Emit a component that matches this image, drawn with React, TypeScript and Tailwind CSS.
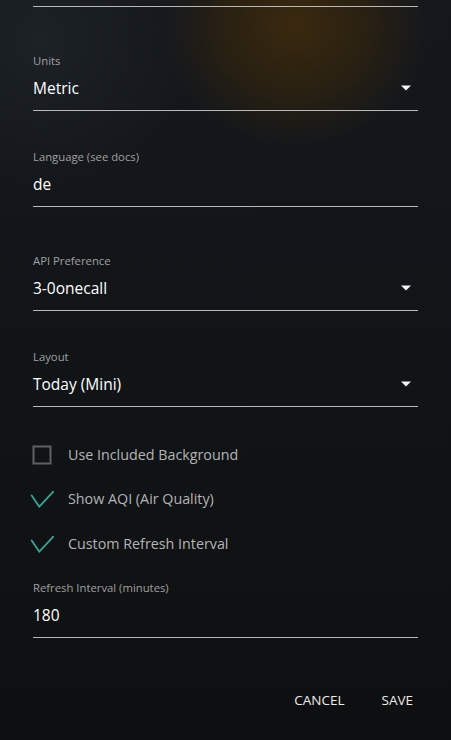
import React from "react";

const font = { fontFamily: '"Open Sans", "Noto Sans", sans-serif' };

function Arrow() {
  return (
    <svg width="12" height="6" viewBox="0 0 12 6" className="shrink-0">
      <path d="M1 0.5 L11 0.5 L6 5.5 Z" fill="#f2f2f2" />
    </svg>
  );
}

function Field({
  label,
  value,
  select,
  mt,
}: {
  label: string;
  value: string;
  select?: boolean;
  mt: string;
}) {
  return (
    <div className={`${mt} border-b border-[#b8b8b8] pb-[10px]`}>
      <div className="text-[11.3px] leading-[16px] text-[#a0a0a0]">{label}</div>
      <div className="mt-[7px] flex items-center justify-between h-[24px]">
        <span className="text-[15.5px] leading-[24px] text-white">{value}</span>
        {select && (
          <span className="mr-[6px] flex items-center">
            <Arrow />
          </span>
        )}
      </div>
    </div>
  );
}

function Check({ checked, label, mt }: { checked: boolean; label: string; mt: string }) {
  return (
    <div className={`${mt} flex h-[28px] items-center -ml-[3px]`}>
      <svg width="24" height="24" viewBox="0 0 24 24" className="shrink-0">
        {checked ? (
          <path
            d="M1.7 8.5 L9.3 19.7 L23.3 4.7"
            fill="none"
            stroke="#35a596"
            strokeWidth="1.8"
            strokeLinecap="round"
            strokeLinejoin="round"
          />
        ) : (
          <rect x="3.5" y="3.5" width="17" height="17" fill="none" stroke="#5f6163" strokeWidth="2" />
        )}
      </svg>
      <span className="ml-[14px] text-[14.3px] leading-[20px] text-[#b4b4b4]">{label}</span>
    </div>
  );
}

export default function App() {
  return (
    <div
      className="relative w-[451px] h-[740px] overflow-hidden bg-[linear-gradient(180deg,#14181c_0%,#111417_55%,#0e0f10_100%)]"
      style={font}
    >
      <div className="pointer-events-none absolute left-[160px] top-[-100px] h-[250px] w-[270px] rounded-full bg-[radial-gradient(ellipse_at_center,rgba(60,42,14,0.95)_0%,rgba(52,37,13,0.7)_35%,rgba(20,20,20,0)_70%)]" />
      <div className="pointer-events-none absolute left-[-120px] top-[-120px] h-[320px] w-[320px] rounded-full bg-[radial-gradient(circle,rgba(40,46,52,0.45)_0%,rgba(20,24,28,0)_70%)]" />
      <div className="relative px-[33px]">
        <div className="h-[7px] border-b border-[#b8b8b8]" />
        <Field mt="mt-[46px]" label="Units" value="Metric" select />
        <Field mt="mt-[38px]" label="Language (see docs)" value="de" />
        <Field mt="mt-[46px]" label="API Preference" value="3-0onecall" select />
        <Field mt="mt-[38px]" label="Layout" value="Today (Mini)" select />
        <Check mt="mt-[34px]" checked={false} label="Use Included Background" />
        <Check mt="mt-[16px]" checked label="Show AQI (Air Quality)" />
        <Check mt="mt-[17px]" checked label="Custom Refresh Interval" />
        <Field mt="mt-[22px]" label="Refresh Interval (minutes)" value="180" />
        <div className="mt-[44px] flex justify-end gap-[21px] -mr-[3px]">
          <button className="h-[36px] px-[8px] text-[13.5px] font-medium uppercase text-[#ececec]">Cancel</button>
          <button className="h-[36px] px-[8px] text-[13.5px] font-medium uppercase text-[#ececec]">Save</button>
        </div>
      </div>
    </div>
  );
}
